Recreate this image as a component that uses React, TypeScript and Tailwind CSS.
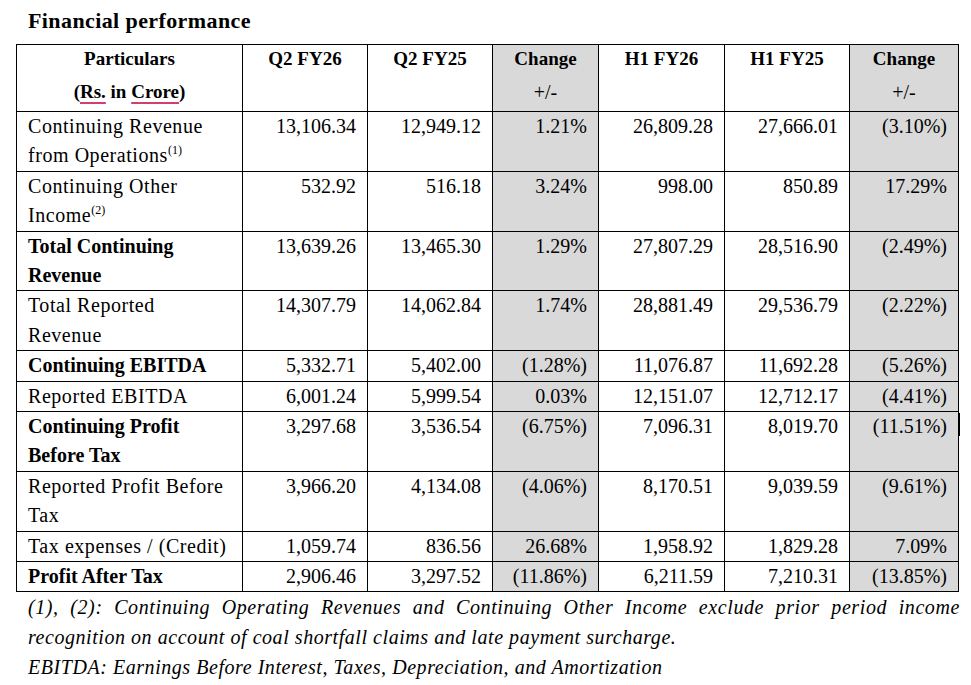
import React from "react";

type Row = {
  label: string[];
  sup?: string;
  bold?: boolean;
  vals: string[];
};

const rows: Row[] = [
  { label: ["Continuing Revenue", "from Operations"], sup: "(1)", vals: ["13,106.34", "12,949.12", "1.21%", "26,809.28", "27,666.01", "(3.10%)"] },
  { label: ["Continuing Other", "Income"], sup: "(2)", vals: ["532.92", "516.18", "3.24%", "998.00", "850.89", "17.29%"] },
  { label: ["Total Continuing", "Revenue"], bold: true, vals: ["13,639.26", "13,465.30", "1.29%", "27,807.29", "28,516.90", "(2.49%)"] },
  { label: ["Total Reported", "Revenue"], vals: ["14,307.79", "14,062.84", "1.74%", "28,881.49", "29,536.79", "(2.22%)"] },
  { label: ["Continuing EBITDA"], bold: true, vals: ["5,332.71", "5,402.00", "(1.28%)", "11,076.87", "11,692.28", "(5.26%)"] },
  { label: ["Reported EBITDA"], vals: ["6,001.24", "5,999.54", "0.03%", "12,151.07", "12,712.17", "(4.41%)"] },
  { label: ["Continuing Profit", "Before Tax"], bold: true, vals: ["3,297.68", "3,536.54", "(6.75%)", "7,096.31", "8,019.70", "(11.51%)"] },
  { label: ["Reported Profit Before", "Tax"], vals: ["3,966.20", "4,134.08", "(4.06%)", "8,170.51", "9,039.59", "(9.61%)"] },
  { label: ["Tax expenses / (Credit)"], vals: ["1,059.74", "836.56", "26.68%", "1,958.92", "1,829.28", "7.09%"] },
  { label: ["Profit After Tax"], bold: true, vals: ["2,906.46", "3,297.52", "(11.86%)", "6,211.59", "7,210.31", "(13.85%)"] },
];

// shaded "Change" columns
const shaded = [false, false, true, false, false, true];

const headers = [
  { top: "Q2 FY26" },
  { top: "Q2 FY25" },
  { top: "Change", bottom: "+/-" },
  { top: "H1 FY26" },
  { top: "H1 FY25" },
  { top: "Change", bottom: "+/-" },
];

export default function App() {
  return (
    <div className="relative w-[971px] h-[685px] bg-white text-black font-['Liberation_Serif',serif] pl-[16px]">
      <div className="pl-[12px] text-[22px] font-bold leading-[41px] tracking-[0.4px] mb-[3px]">
        Financial performance
      </div>

      <table className="table-fixed border-collapse w-[942px]">
        <colgroup>
          <col className="w-[226px]" />
          <col className="w-[125px]" />
          <col className="w-[125px]" />
          <col className="w-[106px]" />
          <col className="w-[126px]" />
          <col className="w-[125px]" />
          <col className="w-[109px]" />
        </colgroup>
        <thead>
          <tr className="text-[19px] font-bold">
            <th className="border border-black align-top p-0 pb-[2px] text-center font-bold">
              <div className="leading-[28px]">Particulars</div>
              <div className="leading-[34px] pt-[2px]">
                (<span className="underline decoration-[#d0406a] decoration-[1.5px] underline-offset-[4px]">Rs.</span> in{" "}
                <span className="underline decoration-[#d0406a] decoration-[1.5px] underline-offset-[4px]">Crore</span>)
              </div>
            </th>
            {headers.map((h, i) => (
              <th
                key={i}
                className={
                  "border border-black align-top p-0 pb-[2px] text-center font-bold " +
                  (shaded[i] ? "bg-[#d9d9d9]" : "bg-white")
                }
              >
                <div className="leading-[28px]">{h.top}</div>
                <div className="leading-[34px] pt-[2px] font-normal text-[20px]">{h.bottom ?? "\u00a0"}</div>
              </th>
            ))}
          </tr>
        </thead>
        <tbody>
          {rows.map((r, ri) => (
            <tr key={ri} className="text-[20px] leading-[29.4px]">
              <td
                className={
                  "border border-black align-top p-0 pl-[11px] " +
                  (r.bold ? "font-bold" : "font-normal tracking-[0.55px]")
                }
              >
                {r.label.map((l, li) => (
                  <div key={li} className="whitespace-nowrap h-[29.4px]">
                    {l}
                    {r.sup && li === r.label.length - 1 && (
                      <sup className="text-[12px] leading-none tracking-normal -top-[8px]">{r.sup}</sup>
                    )}
                  </div>
                ))}
              </td>
              {r.vals.map((v, vi) => (
                <td
                  key={vi}
                  className={
                    "border border-black align-top p-0 pr-[11px] text-right whitespace-nowrap " +
                    (shaded[vi] ? "bg-[#d9d9d9]" : "bg-white")
                  }
                >
                  {v}
                </td>
              ))}
            </tr>
          ))}
        </tbody>
      </table>

      <div className="pl-[12px] w-[944px] italic text-[20px] leading-[30px]">
        <div className="text-justify [text-align-last:justify] whitespace-nowrap tracking-[0.6px]">
          (1), (2): Continuing Operating Revenues and Continuing Other Income exclude prior period income
        </div>
        <div className="tracking-[0.55px]">
          recognition on account of coal shortfall claims and late payment surcharge.
        </div>
        <div className="tracking-[0.55px]">
          EBITDA: Earnings Before Interest, Taxes, Depreciation, and Amortization
        </div>
      </div>

      {/* text cursor mark beside the table */}
      <div className="absolute left-[958px] top-[413px] w-[2px] h-[23px] bg-black" />
    </div>
  );
}
